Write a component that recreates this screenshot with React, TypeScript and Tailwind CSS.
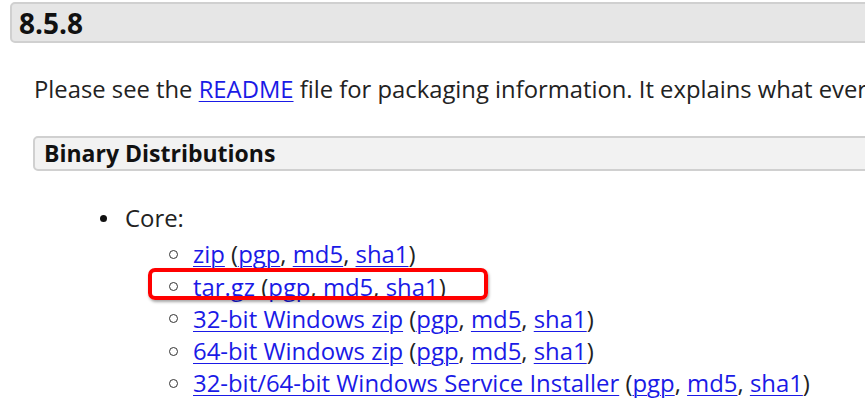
import React from "react";

const L = ({ children }: { children: React.ReactNode }) => (
  <a className="text-[#1a1ae6] underline decoration-1 underline-offset-[3px]" href="#">
    {children}
  </a>
);

const Sums = () => (
  <>
    {" "}(<L>pgp</L>, <L>md5</L>, <L>sha1</L>)
  </>
);

const Sub = ({ children }: { children: React.ReactNode }) => (
  <li className="flex items-center h-[32.3px]">
    <span className="w-[9px] h-[9px] rounded-full border-[1.5px] border-[#333] mr-[15px] ml-[-1px] shrink-0"></span>
    <span className="whitespace-nowrap">{children}</span>
  </li>
);

export default function App() {
  return (
    <div
      className="w-[865px] h-[407px] overflow-hidden bg-white text-[#222] relative"
      style={{ fontFamily: '"Open Sans", sans-serif' }}
    >
      <div className="w-[920px]">
        <div className="mt-[2px] ml-[10px] h-[41px] rounded-[5px] border-2 border-[#d0d0d0] bg-[#e6e6e6] flex items-center pl-[7px]">
          <span className="text-[28px] font-bold text-[#111] leading-none">8.5.8</span>
        </div>
        <p className="ml-[34px] mt-[31px] text-[23.8px] leading-[30px] whitespace-nowrap">
          Please see the <L>README</L> file for packaging information. It explains what every distribution contains.
        </p>
        <div className="mt-[32px] ml-[33px] h-[35px] rounded-[5px] border-2 border-[#d0d0d0] bg-[#f2f2f2] flex items-center pl-[9px]">
          <span className="text-[23px] font-bold text-[#111] leading-none">Binary Distributions</span>
        </div>
        <ul className="mt-[31px] ml-[100px] text-[23.9px]">
          <li>
            <div className="flex items-center h-[32px]">
              <span className="w-[7px] h-[7px] rounded-full bg-[#111] mr-[18px]"></span>
              <span>Core:</span>
            </div>
            <ul className="ml-[70px] mt-[4px]">
              <Sub><L>zip</L><Sums /></Sub>
              <Sub><L>tar.gz</L><Sums /></Sub>
              <Sub><L>32-bit Windows zip</L><Sums /></Sub>
              <Sub><L>64-bit Windows zip</L><Sums /></Sub>
              <Sub><L>32-bit/64-bit Windows Service Installer</L><Sums /></Sub>
            </ul>
          </li>
          <li>
            <div className="flex items-center h-[32px]">
              <span className="w-[7px] h-[7px] rounded-full bg-[#111] mr-[18px]"></span>
              <span>Full documentation:</span>
            </div>
          </li>
        </ul>
      </div>
      <div className="absolute left-[148px] top-[268px] w-[340px] h-[32px] rounded-[7px] border-[4px] border-[#ff0000] shadow-[1px_2px_3px_rgba(0,0,0,0.35)]"></div>
    </div>
  );
}
